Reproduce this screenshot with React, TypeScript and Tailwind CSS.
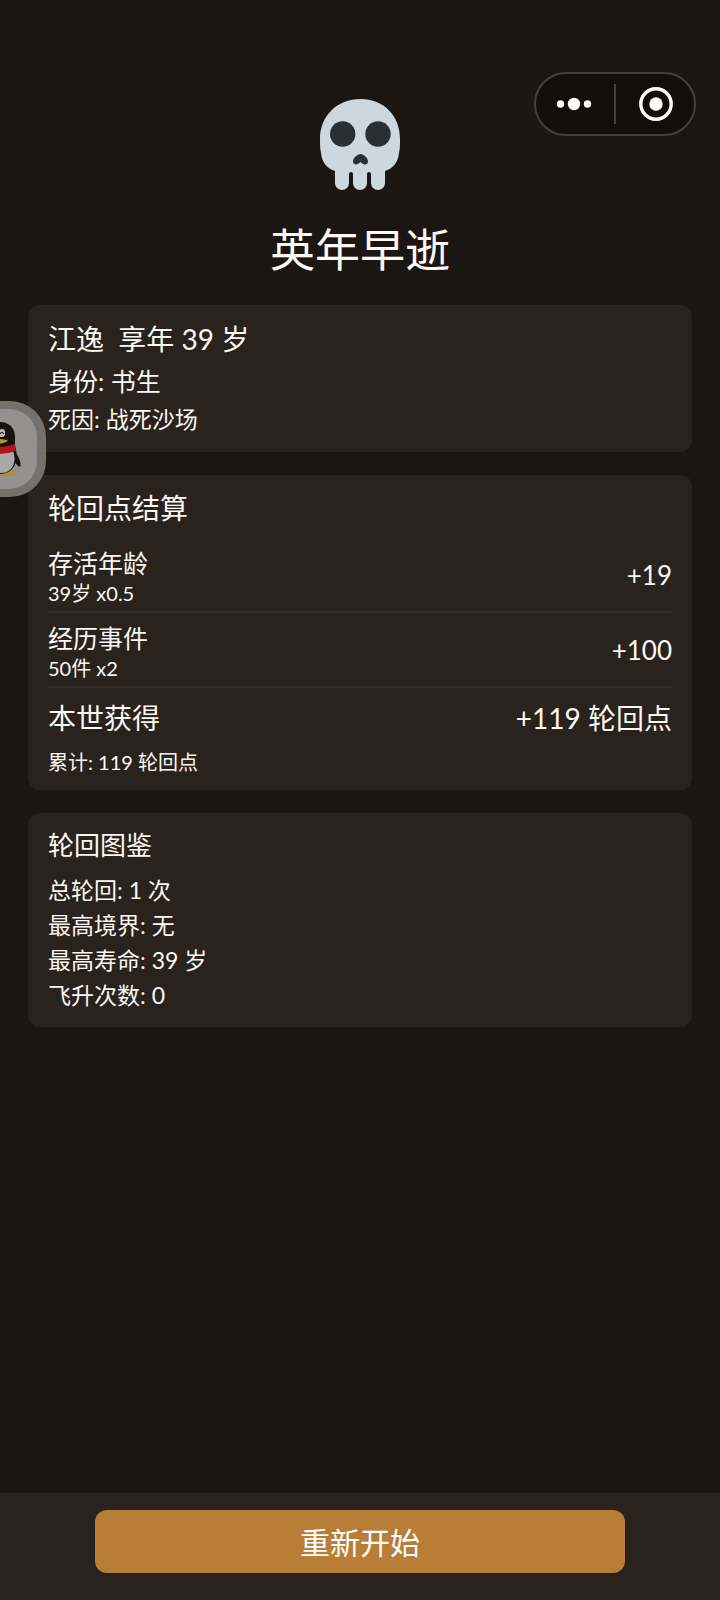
import React from 'react';

type ScoreItem = {
  name: string;
  detail: string;
  points: string;
};

const scoreItems: ScoreItem[] = [
  { name: '存活年龄', detail: '39岁 x0.5', points: '+19' },
  { name: '经历事件', detail: '50件 x2', points: '+100' },
];

const records: string[] = ['总轮回: 1 次', '最高境界: 无', '最高寿命: 39 岁', '飞升次数: 0'];

const Skull = () => (
  <svg viewBox="0 0 82 92" className="w-[82px] h-[92px]" aria-hidden="true">
    <path
      fill="#cdd7de"
      d="M41.500 1C18 1 1 18 1 41c0 5 0 9 1 14 1 9 5 15 14 18v12a7 7 0 0 0 14 0v-9a2 2 0 0 1 4 0v9a7 7 0 0 0 14 0v-9a2 2 0 0 1 4 0v9a7 7 0 0 0 14 0V73c9-3 13-9 14-18 1-5 1-9 1-14C81 18 65 1 41.500 1Z"
    />
    <circle cx="23.700" cy="36" r="12.700" fill="#292f33" />
    <circle cx="59" cy="36" r="12.700" fill="#292f33" />
    <path
      fill="#292f33"
      d="M41.500 56c-3 0-7.500 4-7.500 7.500 0 3 3.500 4 6 1.800l1.500-1.300 1.500 1.300c2.500 2.200 6 1.200 6-1.800 0-3.500-4.500-7.500-7.500-7.500Z"
    />
  </svg>
);

// Capsule menu in the top right corner
const Capsule = () => (
  <div className="absolute top-[72px] right-6 z-10 flex items-center w-[162px] h-16 rounded-full border-2 border-[#45403c] bg-[#110e0b]">
    <button type="button" aria-label="更多" className="flex-1 h-full flex items-center justify-center">
      <svg viewBox="0 0 36 14" className="w-9 h-[14px]" fill="#ffffff">
        <circle cx="3.500" cy="7" r="3.700" />
        <circle cx="17" cy="7" r="6.200" />
        <circle cx="30.500" cy="7" r="3.700" />
      </svg>
    </button>
    <span className="w-[2px] h-10 bg-[#45403c]" />
    <button type="button" aria-label="关闭" className="flex-1 h-full flex items-center justify-center">
      <svg viewBox="0 0 36 34" className="w-9 h-[34px]">
        <circle cx="19" cy="17" r="15.200" fill="none" stroke="#ffffff" strokeWidth="3.400" />
        <circle cx="19" cy="17" r="6.700" fill="#ffffff" />
      </svg>
    </button>
  </div>
);

// Floating bubble, half hidden behind the left edge
const Bubble = () => (
  <button
    type="button"
    aria-label="QQ"
    className="absolute top-[401px] left-0 z-10 w-[46px] h-24 py-2 pr-[9px] rounded-r-[36px] bg-[#797673]/95 overflow-hidden"
  >
    <span className="block h-20 rounded-r-[28px] bg-[#949290] overflow-hidden">
      <svg viewBox="0 0 37 80" className="w-[37px] h-20" aria-hidden="true">
        <path fill="#c08a22" d="M-4 63h16c4 1 5 4 1 4H-4Z" />
        <path fill="#15120f" d="M14 42c4 4 7 10 6.500 15-1 2-4-1-6-5Z" />
        <path fill="#15120f" d="M-14 40C-14 22-10 13 0 13c10 0 15 7 15 15v9c5 15-1 28-15 28h-14Z" />
        <path fill="#aaa8a5" d="M-10 42h23c4 10 0 22-12 22h-11Z" />
        <ellipse cx="2" cy="24" rx="3.200" ry="4" fill="#bdbbb9" />
        <path d="M0 25q2-3 4 0" fill="none" stroke="#15120f" strokeWidth="1.200" />
        <path fill="#c08a22" d="M-4 30c4 0 9 0 12 2-3 2-7 3-12 3Z" />
        <path fill="#b3131d" d="M-4 38c7 0 13-1 19-3l1 7c-6 2-13 3-20 3Z" />
      </svg>
    </span>
  </button>
);

const Card = ({ children }: { children: React.ReactNode }) => (
  <section className="rounded-xl bg-[#2a221c] px-5 pt-[15px] pb-[14px]">{children}</section>
);

const App = () => {
  return (
    <div className="relative flex flex-col min-h-screen bg-[#1c1612] text-[#fbf8f5] font-['Lato','Noto_Sans_CJK_SC',sans-serif]">
      <Capsule />
      <Bubble />

      <header className="flex flex-col items-center pt-[98px]">
        <Skull />
        <h1 className="mt-7 text-[45px] leading-[64px]">英年早逝</h1>
      </header>

      <main className="flex flex-1 flex-col gap-[23px] px-7 pt-[23px] pb-6">
        <Card>
          <h2 className="mb-1 text-[28px] leading-[38px] whitespace-pre">江逸  享年 39 岁</h2>
          <p className="text-[25px] leading-[38px]">身份: 书生</p>
          <p className="text-[23px] leading-[38px]">死因: 战死沙场</p>
        </Card>

        <Card>
          <h2 className="mb-3 text-[28px] leading-9">轮回点结算</h2>
          {scoreItems.map((item) => (
            <div
              key={item.name}
              className="flex items-center justify-between pt-[7px] pb-1.5 border-b-2 border-[#342c27]"
            >
              <div>
                <p className="text-[25px] leading-9">{item.name}</p>
                <p className="text-[20px] leading-6">{item.detail}</p>
              </div>
              <span className="text-[26px] leading-9">{item.points}</span>
            </div>
          ))}
          <div className="mt-3 flex items-center justify-between">
            <span className="text-[28px] leading-9">本世获得</span>
            <span className="text-[28px] leading-9">+119 轮回点</span>
          </div>
          <p className="mt-3 text-[20px] leading-7">累计: 119 轮回点</p>
        </Card>

        <Card>
          <h2 className="mb-[11px] text-[26px] leading-[34px]">轮回图鉴</h2>
          {records.map((record) => (
            <p key={record} className="text-[23px] leading-[35px]">{record}</p>
          ))}
        </Card>
      </main>

      <footer className="flex justify-center bg-[#2a221c] px-[95px] pt-[17px] pb-[27px]">
        <button type="button" className="w-full h-[63px] rounded-xl bg-[#b87e38] text-[30px] leading-9 text-white">
          重新开始
        </button>
      </footer>
    </div>
  );
};

export default App;
